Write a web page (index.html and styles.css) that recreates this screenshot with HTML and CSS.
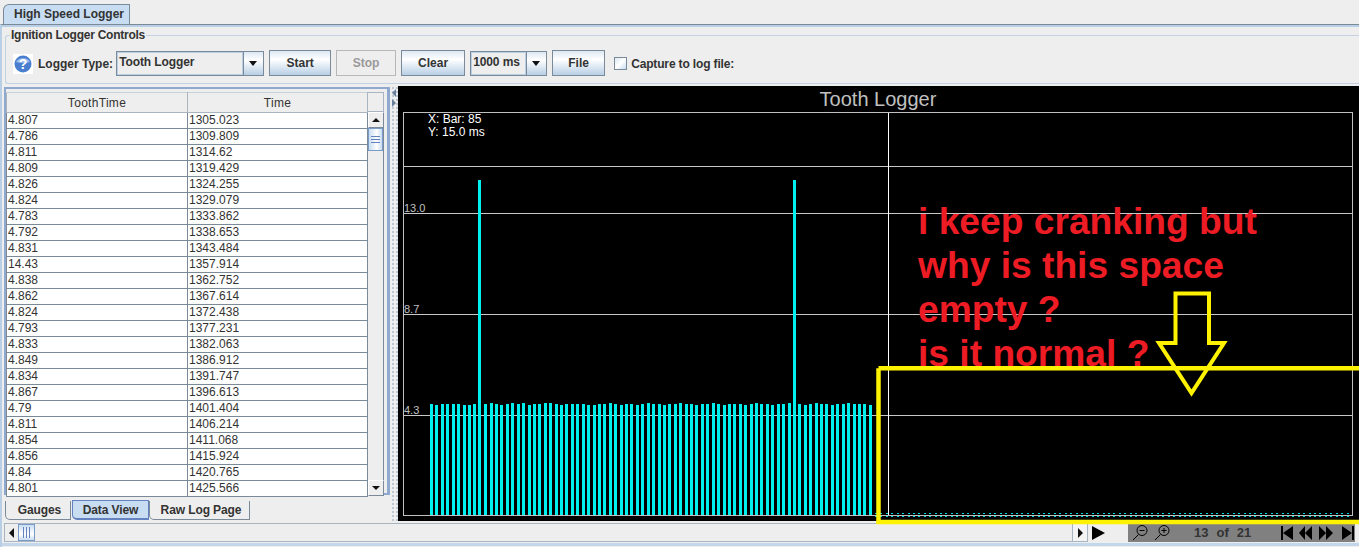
FILE: index.html
```html
<!DOCTYPE html>
<html lang="en">
<head>
  <meta charset="UTF-8" />
  <title>High Speed Logger</title>
  <link rel="stylesheet" href="styles.css">
</head>
<body>
  <div class="tab-strip">
    <div class="top-tab">High Speed Logger</div>
  </div>

  <div class="tab-body">
    <fieldset class="controls">
      <legend>Ignition Logger Controls</legend>
      <svg class="help-icon" width="20" height="20" viewBox="0 0 20 20">
        <rect width="20" height="20" fill="#fff"/>
        <circle cx="10" cy="10" r="8.5" fill="#4a7fd0"/>
        <path d="M3 8a7.5 6 0 0 1 14 0a12 5 0 0 1-14 0z" fill="#9dbdec"/>
        <text x="10" y="15" class="help-mark">?</text>
      </svg>
      <span class="label logger-label">Logger Type:</span>
      <div class="combo logger-combo"><span class="combo-value">Tooth Logger</span><span class="combo-arrow"></span></div>
      <button class="btn btn-start">Start</button>
      <button class="btn btn-stop" disabled>Stop</button>
      <button class="btn btn-clear">Clear</button>
      <div class="combo time-combo"><span class="combo-value">1000 ms</span><span class="combo-arrow"></span></div>
      <button class="btn btn-file">File</button>
      <span class="checkbox"></span>
      <span class="label capture-label">Capture to log file:</span>
    </fieldset>

    <div class="main">
      <div class="left-col">
        <div class="table-panel">
          <div class="table-wrap">
            <table class="log-table">
              <thead>
                <tr><th>ToothTime</th><th>Time</th></tr>
              </thead>
              <tbody>
                <tr><td>4.807</td><td>1305.023</td></tr>
                <tr><td>4.786</td><td>1309.809</td></tr>
                <tr><td>4.811</td><td>1314.62</td></tr>
                <tr><td>4.809</td><td>1319.429</td></tr>
                <tr><td>4.826</td><td>1324.255</td></tr>
                <tr><td>4.824</td><td>1329.079</td></tr>
                <tr><td>4.783</td><td>1333.862</td></tr>
                <tr><td>4.792</td><td>1338.653</td></tr>
                <tr><td>4.831</td><td>1343.484</td></tr>
                <tr><td>14.43</td><td>1357.914</td></tr>
                <tr><td>4.838</td><td>1362.752</td></tr>
                <tr><td>4.862</td><td>1367.614</td></tr>
                <tr><td>4.824</td><td>1372.438</td></tr>
                <tr><td>4.793</td><td>1377.231</td></tr>
                <tr><td>4.833</td><td>1382.063</td></tr>
                <tr><td>4.849</td><td>1386.912</td></tr>
                <tr><td>4.834</td><td>1391.747</td></tr>
                <tr><td>4.867</td><td>1396.613</td></tr>
                <tr><td>4.79</td><td>1401.404</td></tr>
                <tr><td>4.811</td><td>1406.214</td></tr>
                <tr><td>4.854</td><td>1411.068</td></tr>
                <tr><td>4.856</td><td>1415.924</td></tr>
                <tr><td>4.84</td><td>1420.765</td></tr>
                <tr><td>4.801</td><td>1425.566</td></tr>
              </tbody>
            </table>
            <div class="v-scroll">
              <div class="v-scroll-corner"></div>
              <div class="v-scroll-btn"><span class="arrow-up"></span></div>
              <div class="v-scroll-track"><div class="v-scroll-thumb"></div></div>
              <div class="v-scroll-btn"><span class="arrow-down"></span></div>
            </div>
          </div>
        </div>
        <div class="bottom-tabs">
          <div class="bottom-tab tab-gauges">Gauges</div>
          <div class="bottom-tab tab-data">Data View</div>
          <div class="bottom-tab tab-raw">Raw Log Page</div>
        </div>
      </div>

      <div class="splitter">
        <span class="split-left"></span>
        <span class="split-right"></span>
      </div>

      <svg class="chart" width="961" height="435" viewBox="398 86 961 435">
        <rect x="398" y="86" width="961" height="435" fill="#000"/>
        <text x="878" y="106" class="chart-title">Tooth Logger</text>
        <rect x="403.5" y="112.5" width="949" height="403" class="plot-frame"/>
        <path class="grid" d="M404 166.5H1352M404 213.5H1352M404 314.5H1352M404 415.5H1352"/>
        <path class="cross" d="M888.5 113V515"/>
        <text x="428" y="123" class="chart-note">X: Bar: 85</text>
        <text x="428" y="136" class="chart-note">Y: 15.0 ms</text>
        <text x="404" y="212" class="axis-label">13.0</text>
        <text x="404" y="313" class="axis-label">8.7</text>
        <text x="404" y="414" class="axis-label">4.3</text>
        <path class="bars" d="M431.5 404V515M436.5 405V515M442.5 404V515M447.5 404V515M453.5 404V515M458.5 404V515M464.5 405V515M469.5 405V515M474.5 404V515M479.5 180V515M485.5 404V515M491.5 403V515M496.5 404V515M501.5 405V515M507.5 404V515M512.5 403V515M518.5 404V515M523.5 403V515M529.5 405V515M534.5 404V515M539.5 404V515M545.5 403V515M550.5 403V515M556.5 404V515M561.5 405V515M566.5 404V515M572.5 404V515M577.5 404V515M583.5 404V515M588.5 405V515M594.5 405V515M599.5 404V515M604.5 404V515M610.5 403V515M615.5 404V515M621.5 405V515M626.5 404V515M631.5 404V515M637.5 405V515M642.5 404V515M648.5 403V515M653.5 404V515M659.5 404V515M664.5 405V515M669.5 404V515M675.5 404V515M680.5 403V515M686.5 404V515M691.5 404V515M696.5 405V515M702.5 404V515M707.5 404V515M713.5 403V515M718.5 404V515M724.5 405V515M729.5 404V515M734.5 404V515M740.5 404V515M745.5 405V515M751.5 404V515M756.5 403V515M761.5 404V515M767.5 404V515M772.5 405V515M778.5 404V515M783.5 404V515M789.5 403V515M794.5 180V515M799.5 404V515M805.5 405V515M810.5 404V515M816.5 403V515M821.5 404V515M826.5 404V515M832.5 405V515M837.5 404V515M843.5 404V515M848.5 403V515M854.5 404V515M859.5 404V515M864.5 404V515M870.5 405V515"/>
        <path class="empty-bars" d="M875 513.5H1350M875 516.5H1350"/>
      </svg>
    </div>

    <div class="bottom-bar">
      <div class="h-scroll">
        <div class="h-scroll-btn"><span class="arrow-left"></span></div>
        <div class="h-scroll-thumb"></div>
        <div class="h-scroll-track"></div>
        <div class="h-scroll-btn h-scroll-end"><span class="arrow-right"></span></div>
      </div>
      <svg class="play-icon" width="15" height="16" viewBox="0 0 15 16"><path d="M1 1L14 8L1 15z"/></svg>
      <div class="nav-blank"></div>
      <div class="nav-bar">
        <svg class="zoom-icon" width="16" height="17" viewBox="0 0 16 17">
          <circle cx="10" cy="6.5" r="5"/><path d="M6.5 10.5L1 16M7.5 6.5H12.5"/>
        </svg>
        <svg class="zoom-icon" width="16" height="17" viewBox="0 0 16 17">
          <circle cx="10" cy="6.5" r="5"/><path d="M6.5 10.5L1 16M7.5 6.5H12.5M10 4V9"/>
        </svg>
        <span class="page-text"><span>13</span><span>of</span><span>21</span></span>
        <svg class="step-icon" width="76" height="14" viewBox="0 0 76 14">
          <path d="M1 0H3V14H1zM13 0V14L3 7zM32 0V14L25 7zM25 0V14L19 7zM39 0V14L46 7zM46 0V14L53 7zM62 0V14L72 7zM72 0H74V14H72z"/>
        </svg>
      </div>
    </div>
  </div>

  <svg class="markup" width="1359" height="547" viewBox="0 0 1359 547">
    <path class="markup-line" d="M878.5 368.2H1361M878.5 368.2V522H1361"/>
    <path class="markup-line thin" d="M1175.5 293.5H1209V343H1224L1191.5 393L1159 343H1175.5z"/>
  </svg>
  <div class="note">
    <p>i keep cranking but</p>
    <p>why is this space</p>
    <p>empty ?</p>
    <p>is it normal ?</p>
  </div>
</body>
</html>
```
FILE: styles.css
```css
html, body {
  margin: 0;
  padding: 0;
}

body {
  position: relative;
  width: 1359px;
  height: 547px;
  overflow: hidden;
  background: #eeeeee;
  color: #333333;
  font-family: "Liberation Sans", Arial, sans-serif;
  font-size: 12px;
}

/* top tab */
.tab-strip {
  height: 24px;
  padding: 4px 0 0 3px;
  box-sizing: border-box;
}

.top-tab {
  width: 127px;
  height: 20px;
  box-sizing: border-box;
  background: #c8ddf2;
  border: 1px solid #7a8a99;
  border-bottom: none;
  border-radius: 6px 0 0 0;
  font-weight: bold;
  line-height: 19px;
  padding-left: 10px;
}

.tab-body {
  height: 523px;
  box-sizing: border-box;
  border-top: 1px solid #7a8a99;
  box-shadow: inset 0 2px 0 #b8cfe5;
  border-left: 2px solid #b8cfe5;
  padding-top: 9px;
}

/* controls group */
.controls {
  display: flex;
  align-items: center;
  height: 49px;
  box-sizing: border-box;
  margin: 1px 0 0 3px;
  padding: 0 0 0 7px;
  border: 1px solid #c3d3e3;
  border-right: none;
  border-radius: 3px 0 0 3px;
  position: relative;
}

.controls legend {
  position: absolute;
  top: -7px;
  left: 4px;
  padding: 0 1px;
  background: #eeeeee;
  font-weight: bold;
  line-height: 13px;
  letter-spacing: -0.25px;
}

.help-icon {
  flex: none;
  margin: 8px 5px 0 0;
}

.help-mark {
  font-size: 14px;
  font-weight: bold;
  fill: #ffffff;
  text-anchor: middle;
}

.label {
  font-weight: bold;
  white-space: nowrap;
  margin-top: 8px;
}

.logger-label {
  margin-right: 3px;
}

.capture-label {
  letter-spacing: -0.15px;
}

.combo {
  display: flex;
  height: 25px;
  box-sizing: border-box;
  border: 1px solid #7a8a99;
  background: #eeeeee;
  margin-top: 7px;
  flex: none;
}

.combo-value {
  flex: 1;
  border: 1px solid #b8cfe5;
  font-weight: bold;
  line-height: 19px;
  padding-left: 1px;
  letter-spacing: -0.1px;
}

.combo-arrow {
  position: relative;
  border-left: 1px solid #7a8a99;
  background: linear-gradient(#dde8f3, #ffffff 35%, #b8cfe5);
}

.combo-arrow::after {
  content: "";
  position: absolute;
  left: 5px;
  top: 9px;
  border: 4.5px solid transparent;
  border-top: 5px solid #111111;
  border-bottom: none;
}

.logger-combo {
  width: 148px;
}

.logger-combo .combo-arrow {
  width: 19px;
}

.time-combo {
  width: 77px;
  margin-left: 5px;
}

.time-combo .combo-arrow {
  width: 19px;
}

.btn {
  flex: none;
  height: 26px;
  margin: 7px 0 0 5px;
  padding: 0;
  box-sizing: border-box;
  border: 1px solid #7a8a99;
  background: linear-gradient(#dde8f3, #ffffff 35%, #b8cfe5);
  color: #333333;
  font-family: inherit;
  font-size: 12px;
  font-weight: bold;
}

.btn:disabled {
  background: #eeeeee;
  border-color: #b8b8b8;
  color: #999999;
}

.btn-start { width: 62px; }
.btn-stop { width: 60px; }
.btn-clear { width: 64px; }
.btn-file { width: 53px; }

.checkbox {
  flex: none;
  width: 13px;
  height: 13px;
  margin: 8px 4px 0 9px;
  border: 1px solid #7a8a99;
  box-sizing: border-box;
  background: linear-gradient(135deg, #dde8f3, #ffffff 50%, #c8ddf2);
}

/* main split */
.main {
  display: flex;
  margin-top: 2px;
  height: 435px;
}

.left-col {
  width: 388px;
  flex: none;
}

.table-panel {
  height: 408px;
  margin: 1px 0 0 2px;
  box-sizing: border-box;
  border: 2px solid #8fa9cf;
  border-right-width: 3px;
  padding: 3px 1px 0 0;
  background: #eeeeee;
}

.table-wrap {
  display: flex;
  align-items: flex-start;
}

.log-table {
  width: 362px;
  flex: none;
  border-collapse: collapse;
  table-layout: fixed;
  background: #ffffff;
  font-size: 12px;
}

.log-table th {
  height: 19px;
  padding: 0;
  background: #eeeeee;
  border: 1px solid #a8b4c0;
  border-top-color: #c8d0d8;
  font-weight: normal;
  color: #333333;
  letter-spacing: 0.3px;
}

.log-table th:first-child {
  width: 180px;
}

.log-table td {
  height: 15px;
  padding: 0 0 0 1px;
  border: 1px solid #7a8a99;
  border-top: none;
  line-height: 15px;
  font-size: 12px;
  color: #333333;
}

.v-scroll {
  width: 16px;
  flex: none;
}

.v-scroll-corner {
  height: 20px;
  border: 1px solid #a8b4c0;
  border-left: none;
  box-sizing: border-box;
}

.v-scroll-btn {
  height: 16px;
  box-sizing: border-box;
  border: 1px solid #7a8a99;
  border-top-color: #ffffff;
  border-left-color: #ffffff;
  display: flex;
  align-items: center;
  justify-content: center;
  background: #eeeeee;
}

.arrow-up {
  border: 4px solid transparent;
  border-bottom: 4px solid #111111;
  border-top: none;
}

.arrow-down {
  border: 4px solid transparent;
  border-top: 4px solid #111111;
  border-bottom: none;
}

.v-scroll-track {
  height: 352px;
  box-sizing: border-box;
  border-right: 1px solid #7a8a99;
  background: #eeeeee;
}

.v-scroll-thumb {
  height: 23px;
  box-sizing: border-box;
  border: 1px solid #7a9ac8;
  background: linear-gradient(90deg, #c8ddf2, #ffffff 60%, #c8ddf2);
  display: flex;
  align-items: center;
  justify-content: center;
}

.v-scroll-thumb::after {
  content: "";
  width: 9px;
  height: 5px;
  border-top: 1px solid #6382bf;
  border-bottom: 1px solid #6382bf;
  background: linear-gradient(transparent 2px, #6382bf 2px 3px, transparent 3px);
}

/* bottom tabs */
.bottom-tabs {
  display: flex;
  padding-left: 3px;
  height: 24px;
  margin-top: 6px;
}

.bottom-tab {
  box-sizing: border-box;
  height: 19px;
  border: 1px solid #7a8a99;
  border-top: none;
  font-weight: bold;
  line-height: 18px;
  text-align: center;
  border-radius: 0 0 0 5px;
  padding-left: 3px;
  letter-spacing: -0.1px;
}

.tab-gauges { width: 66px; }
.tab-data {
  width: 77px;
  margin-left: 1px;
  padding-left: 0;
  background: #c8ddf2;
  border: 1px solid #6382bf;
  border-bottom-width: 2px;
  border-top-width: 1px;
  height: 20px;
  margin-top: -1px;
}
.tab-raw { width: 101px; }

.splitter {
  width: 8px;
  flex: none;
  margin-left: 1px;
  position: relative;
  background-image: radial-gradient(#b8c4d0 0.7px, transparent 0.8px);
  background-size: 4px 4px;
}

.split-left {
  position: absolute;
  top: 3px;
  left: 1px;
  border: 4px solid transparent;
  border-right: 4px solid #6a7f9c;
  border-left: none;
}

.split-right {
  position: absolute;
  top: 13px;
  left: 1px;
  border: 4px solid transparent;
  border-left: 4px solid #6a7f9c;
  border-right: none;
}

/* chart */
.chart {
  flex: none;
  display: block;
  margin-left: -1px;
}

.chart-title {
  fill: #c0c0c0;
  font-size: 20px;
  text-anchor: middle;
}

.plot-frame {
  fill: none;
  stroke: #c0c0c0;
  shape-rendering: crispEdges;
}

.grid {
  stroke: #c8c8c8;
  fill: none;
  shape-rendering: crispEdges;
}

.cross {
  stroke: #ffffff;
  shape-rendering: crispEdges;
}

.chart-note {
  fill: #ffffff;
  font-size: 12px;
}

.axis-label {
  fill: #c0c0c0;
  font-size: 11px;
}

.bars {
  stroke: #00f0f0;
  stroke-width: 3;
  fill: none;
  shape-rendering: crispEdges;
}

.empty-bars {
  stroke: #00d8d8;
  stroke-width: 1;
  stroke-dasharray: 2 3.42;
  fill: none;
  shape-rendering: crispEdges;
}

/* bottom bar */
.bottom-bar {
  display: flex;
  align-items: center;
  margin-top: 1px;
  height: 21px;
  border-bottom: 3px solid #c3d6ea;
  box-sizing: content-box;
}

.h-scroll {
  display: flex;
  width: 1084px;
  height: 19px;
  margin-left: 2px;
  flex: none;
  box-sizing: border-box;
  border: 1px solid #a8b4c0;
}

.h-scroll-btn {
  width: 13px;
  flex: none;
  display: flex;
  align-items: center;
  justify-content: center;
}

.h-scroll-end {
  width: 14px;
  background: #f4f4f4;
  border-left: 1px solid #a8b4c0;
}

.arrow-left {
  border: 5px solid transparent;
  border-right: 5px solid #111111;
  border-left: none;
}

.arrow-right {
  border: 5px solid transparent;
  border-left: 5px solid #111111;
  border-right: none;
}

.h-scroll-thumb {
  width: 17px;
  flex: none;
  box-sizing: border-box;
  border: 1px solid #7a9ac8;
  background: linear-gradient(#c8ddf2, #ffffff 60%, #c8ddf2);
  display: flex;
  align-items: center;
  justify-content: center;
}

.h-scroll-thumb::after {
  content: "";
  width: 5px;
  height: 11px;
  border-left: 1px solid #6382bf;
  border-right: 1px solid #6382bf;
  background: linear-gradient(90deg, transparent 2px, #6382bf 2px 3px, transparent 3px);
}

.h-scroll-track {
  flex: 1;
}

.play-icon {
  flex: none;
  margin-left: 3px;
  fill: #000000;
}

.nav-blank {
  width: 22px;
  flex: none;
}

.nav-bar {
  display: flex;
  align-items: center;
  width: 227px;
  height: 19px;
  flex: none;
  background: #808080;
}

.zoom-icon {
  flex: none;
  margin-left: 4px;
  margin-right: 2px;
  fill: none;
  stroke: #000000;
  stroke-width: 1;
}

.page-text {
  display: flex;
  gap: 8px;
  margin-left: 22px;
  font-weight: bold;
  font-size: 13px;
  color: #333333;
}

.step-icon {
  flex: none;
  margin-left: 29px;
  fill: #000000;
}

/* red and yellow scribbles on top of the screenshot */
.markup {
  position: absolute;
  top: 0;
  left: 0;
  pointer-events: none;
}

.markup-line {
  fill: none;
  stroke: #fff200;
  stroke-width: 4.5;
}

.markup-line.thin {
  stroke-width: 4;
}

.note {
  position: absolute;
  left: 918px;
  top: 199px;
  color: #ed1c24;
  font-size: 37.2px;
  font-weight: bold;
  line-height: 44px;
  white-space: nowrap;
}

.note p {
  margin: 0;
}
```
